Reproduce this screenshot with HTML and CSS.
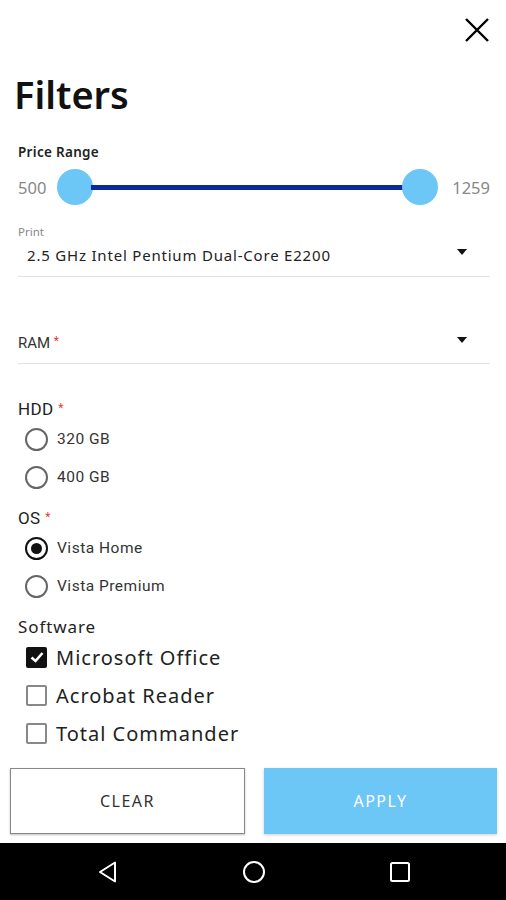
FILE: index.html
```html
<!DOCTYPE html>
<html>
<head>
  <title>Filters</title>
  <link rel="stylesheet" href="styles.css">
</head>
<body>
  <div class="screen">
    <div class="top">
      <svg class="close" width="26" height="26" viewBox="0 0 26 26">
        <path d="M2 2 L24 24 M24 2 L2 24" stroke="#000" stroke-width="2.4" fill="none"/>
      </svg>
    </div>

    <h1 class="title">Filters</h1>

    <div class="content">
      <div class="price-label">Price Range</div>
      <div class="slider">
        <span class="slider-val">500</span>
        <div class="track">
          <span class="thumb"></span>
          <span class="bar"></span>
          <span class="thumb"></span>
        </div>
        <span class="slider-val slider-max">1259</span>
      </div>

      <div class="select">
        <div class="select-hint">Print</div>
        <div class="select-row">
          <span class="select-value">2.5 GHz Intel Pentium Dual-Core E2200</span>
          <span class="arrow"></span>
        </div>
      </div>

      <div class="select select-empty">
        <div class="select-row">
          <span class="select-ph">RAM <span class="req">*</span></span>
          <span class="arrow"></span>
        </div>
      </div>

      <div class="group group-first">
        <div class="group-title">HDD <span class="req">*</span></div>
        <div class="option"><span class="radio"></span>320 GB</div>
        <div class="option"><span class="radio"></span>400 GB</div>
      </div>

      <div class="group">
        <div class="group-title">OS <span class="req">*</span></div>
        <div class="option"><span class="radio checked"></span>Vista Home</div>
        <div class="option"><span class="radio"></span>Vista Premium</div>
      </div>

      <div class="group">
        <div class="group-title group-title-wide">Software</div>
        <div class="check-option">
          <span class="box checked">
            <svg width="20" height="20" viewBox="0 0 20 20"><path d="M4.5 10.5 L8.5 14 L15.5 6" stroke="#fff" stroke-width="2.6" fill="none"/></svg>
          </span>Microsoft Office
        </div>
        <div class="check-option"><span class="box"></span>Acrobat Reader</div>
        <div class="check-option"><span class="box"></span>Total Commander</div>
      </div>
    </div>

    <div class="actions">
      <button class="btn btn-clear">CLEAR</button>
      <button class="btn btn-apply">APPLY</button>
    </div>

    <div class="navbar">
      <svg width="22" height="22" viewBox="0 0 22 22"><path d="M18 1.5 L18 20.5 L3 11 Z" stroke="#fff" stroke-width="2" fill="none" stroke-linejoin="round"/></svg>
      <svg width="24" height="24" viewBox="0 0 24 24"><circle cx="12" cy="12" r="10" stroke="#fff" stroke-width="2" fill="none"/></svg>
      <svg width="22" height="22" viewBox="0 0 22 22"><rect x="2" y="2" width="18" height="18" rx="1.5" stroke="#fff" stroke-width="2" fill="none"/></svg>
    </div>
  </div>
</body>
</html>
```

FILE: styles.css
```css
body {
  margin: 0;
  font-family: "Noto Sans", Arial, sans-serif;
  background-color: #fff;
  color: #222;
}

.screen {
  width: 506px;
  height: 900px;
  display: flex;
  flex-direction: column;
  overflow: hidden;
}

.top {
  display: flex;
  justify-content: flex-end;
  padding: 17px 16px 0 0;
  height: 28px;
}

.title {
  margin: 29px 0 0 14px;
  font-size: 38px;
  font-weight: 600;
  line-height: 40px;
  color: #111;
}

.content {
  flex: 1;
  padding: 0 16px 0 18px;
}

.price-label {
  margin-top: 30px;
  font-size: 13.5px;
  font-weight: 600;
  letter-spacing: 0.3px;
  line-height: 16px;
  color: #222;
}

.slider {
  display: flex;
  align-items: center;
  height: 40px;
  margin-top: 7px;
}

.slider-val {
  font-size: 16.5px;
  color: #888;
  width: 39px;
}

.slider-max {
  width: auto;
  margin-left: 14px;
}

.track {
  flex: 1;
  display: flex;
  align-items: center;
}

.thumb {
  width: 36px;
  height: 36px;
  border-radius: 50%;
  background-color: #6cc6f6;
  flex-shrink: 0;
}

.bar {
  flex: 1;
  height: 5px;
  background-color: #0a2a9e;
  margin: 0 -2px;
}

.select {
  border-bottom: 1px solid #e2e2e2;
  margin-top: 18px;
}

.select-hint {
  font-size: 11.5px;
  color: #888;
  line-height: 14px;
}

.select-row {
  display: flex;
  align-items: center;
  justify-content: space-between;
  height: 37px;
  padding-bottom: 6px;
  box-sizing: border-box;
}

.select-value {
  font-size: 15px;
  letter-spacing: 0.8px;
  color: #222;
  padding-left: 9px;
}

.arrow {
  width: 0;
  height: 0;
  border-left: 5px solid transparent;
  border-right: 5px solid transparent;
  border-top: 6px solid #111;
  margin-right: 23px;
  margin-top: -6px;
}

.select-empty {
  margin-top: 46px;
}

.select-empty .select-row {
  height: 40px;
  padding-bottom: 0;
}

.select-ph {
  font-family: Roboto, Arial, sans-serif;
  font-size: 15px;
  color: #333;
}

.req {
  color: #e53935;
  font-size: 12px;
  vertical-align: 3px;
}

.group-title {
  font-family: Roboto, Arial, sans-serif;
  font-size: 17px;
  letter-spacing: 0.4px;
  color: #222;
  line-height: 22px;
  margin-top: 10px;
}

.group-first .group-title {
  margin-top: 33px;
}

.group-title-wide {
  font-family: "Noto Sans", Arial, sans-serif;
  letter-spacing: 0.9px;
  margin-top: 11px;
}

.option {
  display: flex;
  align-items: center;
  height: 38px;
  font-family: Roboto, Arial, sans-serif;
  font-size: 15.5px;
  letter-spacing: 0.5px;
  color: #333;
}

.radio {
  width: 19px;
  height: 19px;
  border: 2px solid #666;
  border-radius: 50%;
  margin: 0 9px 0 7px;
  display: flex;
  align-items: center;
  justify-content: center;
  box-sizing: content-box;
}

.radio.checked {
  border-color: #111;
}

.radio.checked::after {
  content: "";
  width: 11px;
  height: 11px;
  border-radius: 50%;
  background-color: #111;
}

.check-option {
  display: flex;
  align-items: center;
  height: 38px;
  font-size: 20px;
  letter-spacing: 1px;
  color: #222;
}

.box {
  width: 17px;
  height: 17px;
  border: 2px solid #888;
  border-radius: 2px;
  margin: 0 9px 0 8px;
  display: flex;
  align-items: center;
  justify-content: center;
}

.box.checked {
  background-color: #111;
  border-color: #111;
}

.box svg {
  flex-shrink: 0;
}

.actions {
  display: flex;
  gap: 19px;
  padding: 0 9px 9px 10px;
}

.btn {
  flex: 1;
  height: 66px;
  font-family: "Noto Sans", Arial, sans-serif;
  font-size: 16px;
  letter-spacing: 1.5px;
  border-radius: 0;
  cursor: pointer;
}

.btn-clear {
  background-color: #fff;
  border: 1px solid #888;
  color: #333;
  box-shadow: 0 1px 2px rgba(0, 0, 0, 0.25);
}

.btn-apply {
  background-color: #6cc6f6;
  border: none;
  color: #fff;
  box-shadow: 0 1px 3px rgba(0, 0, 0, 0.2);
}

.navbar {
  height: 57px;
  background-color: #000;
  display: flex;
  align-items: center;
  justify-content: center;
  gap: 123px;
  padding-left: 2px;
}
```
